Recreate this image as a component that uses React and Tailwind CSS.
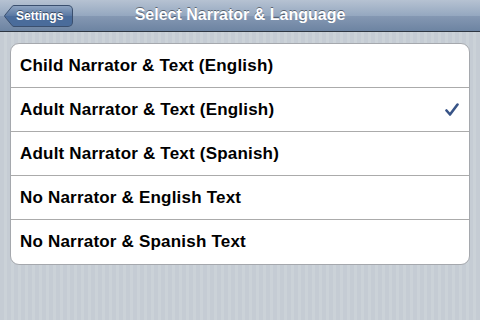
export default function App() {
  const rows = [
    { label: "Child Narrator & Text (English)" },
    { label: "Adult Narrator & Text (English)", checked: true },
    { label: "Adult Narrator & Text (Spanish)" },
    { label: "No Narrator & English Text" },
    { label: "No Narrator & Spanish Text" },
  ];
  return (
    <div
      className="w-[480px] h-[320px] overflow-hidden flex flex-col"
      style={{ fontFamily: '"Liberation Sans", Arial, sans-serif' }}
    >
      <div className="h-[32px] shrink-0 relative flex items-center justify-center border-b border-[#2d3642] bg-[linear-gradient(to_bottom,#b6c2d2_0%,#95a8c0_50%,#8598b3_51%,#6d84a2_100%)]">
        <div className="absolute left-[4px] top-[5px] h-[22px] flex items-center">
          <svg width="12" height="22" viewBox="0 0 12 22" className="block">
            <defs>
              <linearGradient id="bb" x1="0" y1="0" x2="0" y2="1">
                <stop offset="0" stopColor="#8ea4c1" />
                <stop offset="0.5" stopColor="#5877a2" />
                <stop offset="0.51" stopColor="#4a6c9b" />
                <stop offset="1" stopColor="#4a6c9b" />
              </linearGradient>
            </defs>
            <path d="M12 0.5 L10 0.5 Q9 0.5 8.3 1.2 L0.8 10.3 Q0.3 11 0.8 11.7 L8.3 20.8 Q9 21.5 10 21.5 L12 21.5 Z" fill="url(#bb)" stroke="#3a4f6e" strokeWidth="1" />
          </svg>
          <div className="h-[22px] -ml-px pr-[9px] pl-[1px] flex items-center rounded-r-[5px] border border-l-0 border-[#3a4f6e] bg-[linear-gradient(to_bottom,#8ea4c1_0%,#5877a2_50%,#4a6c9b_51%,#4a6c9b_100%)] text-white font-bold text-[12px] [text-shadow:0_-1px_0_rgba(0,0,0,0.45)]">
            Settings
          </div>
        </div>
        <div className="text-white font-bold text-[16px] [text-shadow:0_-1px_0_rgba(0,0,0,0.45)] mt-[-1px]">
          Select Narrator &amp; Language
        </div>
      </div>
      <div className="flex-1 bg-[repeating-linear-gradient(to_right,#c5ccd4_0px,#c5ccd4_4px,#cbd2d8_4px,#cbd2d8_7px)] pt-[11px] px-[10px]">
        <div className="bg-white border border-[#a5a8ad] rounded-[9px] overflow-hidden">
          {rows.map((r, i) => (
            <div
              key={i}
              className={`h-[44px] flex items-center justify-between pl-[9px] pr-[10px] ${i < rows.length - 1 ? "border-b border-[#ababab]" : ""}`}
            >
              <span className="text-black font-bold text-[17px] tracking-[0.2px]">{r.label}</span>
              {r.checked && (
                <svg width="14" height="14" viewBox="0 0 14 14">
                  <path d="M1.5 7.5 L5 11.5 L12.5 1.5" fill="none" stroke="#385487" strokeWidth="2.6" strokeLinecap="round" strokeLinejoin="round" />
                </svg>
              )}
            </div>
          ))}
        </div>
      </div>
    </div>
  );
}
